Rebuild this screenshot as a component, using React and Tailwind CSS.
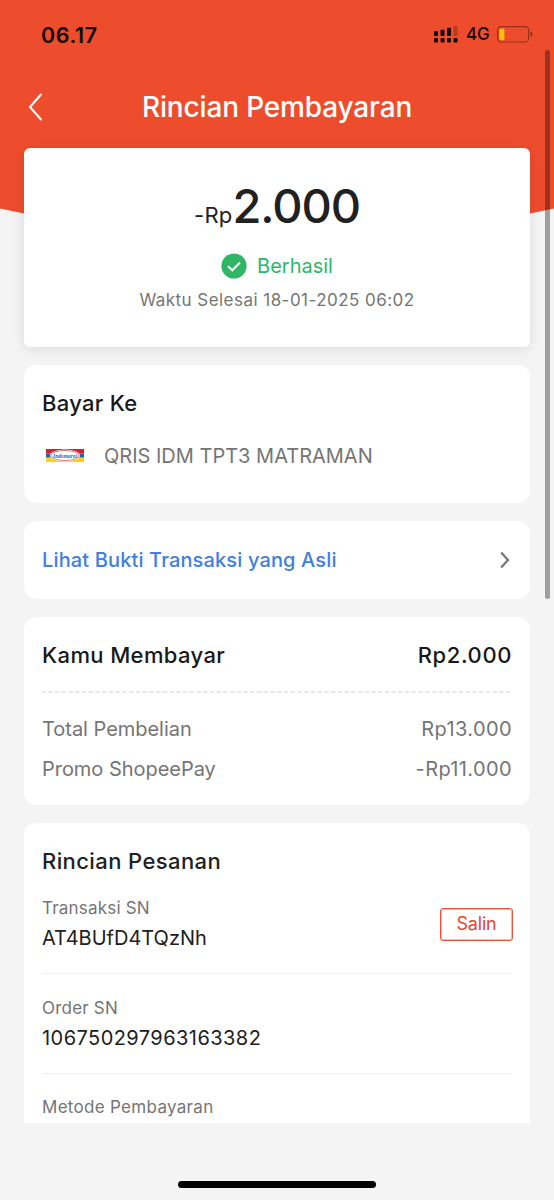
import React from 'react';

const charges = [
  { label: 'Total Pembelian', value: 'Rp13.000' },
  { label: 'Promo ShopeePay', value: '-Rp11.000' },
];

const SignalIcon = () => (
  <svg width="24" height="17" viewBox="0 0 24 17" fill="#150300">
    <rect x="0" y="5" width="4" height="5" rx="1" />
    <rect x="6.5" y="3.8" width="4" height="6.2" rx="1" />
    <rect x="13" y="1.8" width="4" height="8.2" rx="1" />
    <rect x="19.5" y="0" width="4" height="10" rx="1" fill="#b83a20" />
    <rect x="0" y="12" width="4" height="4.6" rx="1" />
    <rect x="6.5" y="12" width="4" height="4.6" rx="1" />
    <rect x="13" y="12" width="4" height="4.6" rx="1" />
    <rect x="19.5" y="12" width="4" height="4.6" rx="1" />
  </svg>
);

const BatteryIcon = () => (
  <svg width="36" height="17" viewBox="0 0 36 17" fill="none">
    <rect x="0.6" y="0.6" width="31" height="15.4" rx="3.6" stroke="#9c2f18" strokeWidth="1.2" />
    <rect x="2.4" y="2.4" width="5" height="11.8" rx="1.6" fill="#ffc400" />
    <path d="M33.4 5.6c1.8.7 2.2 1.6 2.2 2.7s-.4 2-2.2 2.7z" fill="#9c2f18" />
  </svg>
);

const MerchantLogo = () => (
  <svg width="38" height="13" viewBox="0 0 38 13">
    <rect width="38" height="4.4" fill="#d7202f" />
    <rect y="4.4" width="38" height="4.3" fill="#1b66b0" />
    <rect y="8.7" width="38" height="4.3" fill="#fbcf1d" />
    <ellipse cx="19" cy="6.5" rx="15" ry="6" fill="#fff" />
    <ellipse cx="19" cy="6.5" rx="14" ry="5" fill="none" stroke="#d8404b" strokeWidth="0.7" />
    <text
      x="19"
      y="8.7"
      textAnchor="middle"
      textLength="24"
      lengthAdjust="spacingAndGlyphs"
      fontFamily="Liberation Serif, serif"
      fontSize="7"
      fontWeight="700"
      fontStyle="italic"
      fill="#2468b0"
    >
      Ind<tspan fill="#dc3340">o</tspan>maret
    </text>
  </svg>
);

const StatusBar = () => (
  <div className="flex h-[68px] items-center justify-between pl-[41px] pr-[21px] pt-[2px] text-[#150300]">
    <span className="text-[21.5px] font-semibold tracking-[0.6px]">06.17</span>
    <div className="flex items-center">
      <div className="-mt-px">
        <SignalIcon />
      </div>
      <span className="ml-[8px] w-[24px] text-[17px] font-medium tracking-[-0.1px]">4G</span>
      <div className="-mt-[2px] ml-[7px]">
        <BatteryIcon />
      </div>
    </div>
  </div>
);

const OrderField = ({ label, value, action }) => (
  <div className="flex items-center justify-between border-b border-[#efefef] pb-5">
    <div>
      <p className="text-[17px] leading-[30px] tracking-[0.2px] text-[#757575]">{label}</p>
      <p className="text-xl leading-[30px] text-[#212121]">{value}</p>
    </div>
    {action}
  </div>
);

const App = () => {
  return (
    <div className="relative h-[1200px] w-[554px] overflow-hidden bg-[#f4f4f4] font-['Inter','Liberation_Sans',sans-serif]">
      {/* Header backdrop, its lower edge dips towards the middle */}
      <div className="absolute inset-x-0 top-0 h-[216px] bg-[#ee4d2d] [clip-path:polygon(0_0,100%_0,100%_208.5px,530px_213.5px,24px_213.5px,0_208.5px)]" />

      <div className="relative flex h-[1123px] flex-col">
        <StatusBar />

        <div className="grid h-[80px] grid-cols-[60px_1fr_60px] items-center pb-[2px] text-white">
          <svg className="ml-7" width="16" height="30" viewBox="0 0 16 30" fill="none" stroke="currentColor" strokeWidth="2" strokeLinecap="round" strokeLinejoin="round">
            <path d="M13 2.5 2 15l11 12.5" />
          </svg>
          <h1 className="text-center text-[28px] font-medium leading-10 tracking-[-0.15px]">Rincian Pembayaran</h1>
        </div>

        <main className="flex flex-1 flex-col gap-[18px] px-6">
          {/* Amount */}
          <section className="flex h-[199px] flex-col items-center rounded-md bg-white pt-[30px] shadow-[0_2px_14px_rgba(0,0,0,0.1)]">
            <div className="flex h-14 items-baseline leading-[56px] text-[#212121]">
              <span className="text-[22px] tracking-[0.2px]">-Rp</span>
              <span className="text-[47px] font-medium tracking-[-1.1px]">2.000</span>
            </div>
            <div className="mt-[18px] flex h-[27px] items-center gap-[10px] text-xl text-[#2db76a]">
              <svg width="26" height="26" viewBox="0 0 26 26" fill="none">
                <circle cx="13" cy="13" r="12.6" fill="#30b566" />
                <path d="m7 13.2 4.3 4.1 7.7-7.8" stroke="#fff" strokeWidth="2" />
              </svg>
              <span>Berhasil</span>
            </div>
            <p className="mt-[9px] text-[17px] leading-[25px] tracking-[0.46px] text-[#757575]">Waktu Selesai 18-01-2025 06:02</p>
          </section>

          {/* Merchant */}
          <section className="h-[138px] rounded-xl bg-white px-[18px] pt-6">
            <h2 className="text-[22px] font-medium leading-7 tracking-[0.3px] text-[#191919]">Bayar Ke</h2>
            <div className="mt-[22px] flex h-8 items-center gap-5 pl-1">
              <MerchantLogo />
              <span className="pt-px text-xl text-[#757575]">QRIS IDM TPT3 MATRAMAN</span>
            </div>
          </section>

          <section className="flex h-[78px] items-center justify-between rounded-xl bg-white px-[18px]">
            <span className="text-xl font-medium tracking-[0.14px] text-[#4080e0]">Lihat Bukti Transaksi yang Asli</span>
            <svg className="mr-[2px]" width="10" height="18" viewBox="0 0 10 18" fill="none" stroke="#757575" strokeWidth="2.2">
              <path d="m1.2 1.5 6.8 7.5-6.8 7.5" />
            </svg>
          </section>

          {/* Payment summary */}
          <section className="h-[188px] rounded-xl bg-white px-[18px] pt-6">
            <div className="flex justify-between text-[22px] font-medium leading-7 text-[#191919]">
              <span className="tracking-[0.38px]">Kamu Membayar</span>
              <span className="tracking-[0.6px]">Rp2.000</span>
            </div>
            <div className="mt-[22px] h-[2px] bg-[repeating-linear-gradient(115deg,#e9e9e9_0_4px,#ffffff_4px_6.1px)]" />
            <div className="mt-4">
              {charges.map((row) => (
                <div key={row.label} className="flex justify-between text-xl leading-10 text-[#757575]">
                  <span className="tracking-[-0.03px]">{row.label}</span>
                  <span className="tracking-[0.38px]">{row.value}</span>
                </div>
              ))}
            </div>
          </section>

          {/* Order details, runs on to the end of the scroll area */}
          <section className="flex-1 rounded-t-xl bg-white px-[18px] pt-6">
            <h2 className="text-[22px] font-medium leading-7 tracking-[0.4px] text-[#212121]">Rincian Pesanan</h2>
            <div className="mt-[18px] space-y-[19px]">
              <OrderField
                label="Transaksi SN"
                value="AT4BUfD4TQzNh"
                action={
                  <button className="-mr-px mt-[2px] h-[33px] w-[73px] rounded-[3px] border border-[#e8523c] text-[18px] leading-none tracking-[-0.2px] text-[#e8452f] shadow-[inset_0_0_0_1px_rgba(232,82,60,0.4)]">
                    Salin
                  </button>
                }
              />
              <OrderField label="Order SN" value={<span className="tracking-[0.44px]">106750297963163382</span>} />
            </div>
            <p className="mt-[18px] text-[17px] leading-[30px] tracking-[0.3px] text-[#757575]">Metode Pembayaran</p>
          </section>
        </main>
      </div>

      {/* Scroll indicator */}
      <div className="absolute left-[545px] top-[50px] h-[549px] w-[5px] rounded-full bg-black/35" />

      {/* Home indicator */}
      <div className="mx-auto mt-[58px] h-[7px] w-[198px] rounded-full bg-black" />
    </div>
  );
};

export default App;
